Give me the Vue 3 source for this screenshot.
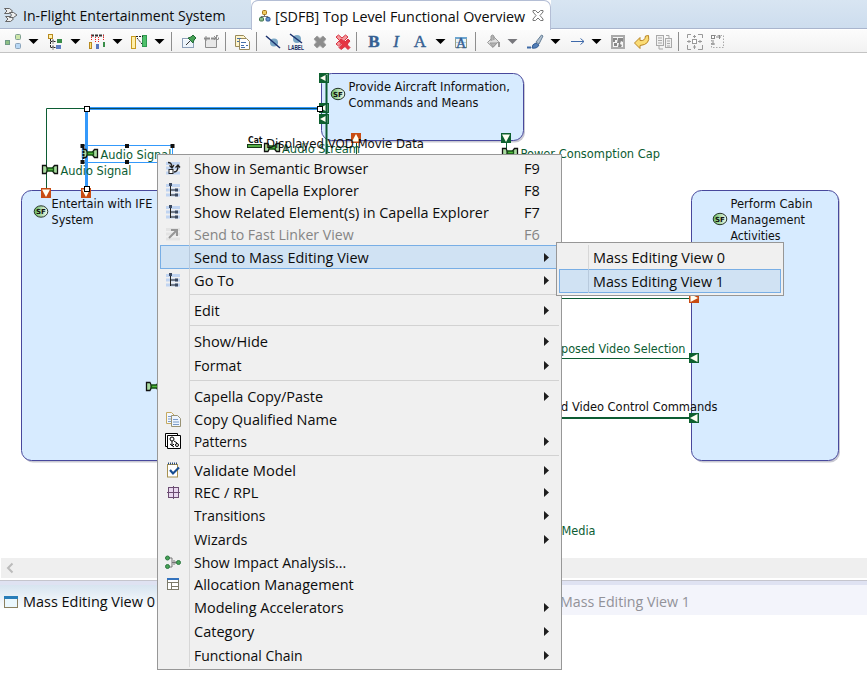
<script setup>
const vFit = {
  mounted(el, binding) {
    const natural = el.offsetWidth
    if (binding.value && natural) el.style.transform = `scaleX(${binding.value / natural})`
  }
}

// Toolbar entries: [kind, space before the entry]
const tools = [
  ['layout', 5], ['drop', 8], ['tree', 9], ['drop', 8], ['distribute', 9], ['drop', 8], ['size', 9], ['drop', 8],
  ['sep', 7], ['pin', 9], ['unpin', 7], ['sep', 5], ['paste', 8], ['sep', 6], ['hide', 8], ['hideLabel', 7],
  ['delete', 8], ['deleteModel', 7], ['sep', 5], ['bold', 9], ['italic', 6], ['font', 8], ['drop', 8], ['fontBox', 8],
  ['sep', 6], ['bucket', 9], ['dropOff', 7], ['brush', 10], ['drop', 8], ['line', 10], ['drop', 6], ['image', 9],
  ['undo', 8], ['copy', 6], ['sep', 6], ['autosize', 8], ['region', 7]
]

const menu = [
  { t: 'Show in Semantic Browser', w: 174, icon: 'semantic', key: 'F9' },
  { t: 'Show in Capella Explorer', w: 165, icon: 'tree', key: 'F8' },
  { t: 'Show Related Element(s) in Capella Explorer', w: 295, icon: 'tree', key: 'F7' },
  { t: 'Send to Fast Linker View', w: 160, icon: 'linker', key: 'F6', off: true },
  { t: 'Send to Mass Editing View', w: 175, sub: true, on: true, tall: true },
  { t: 'Go To', w: 40, icon: 'tree', sub: true },
  { sep: true },
  { t: 'Edit', w: 26, sub: true, tall: true },
  { sep: true },
  { t: 'Show/Hide', w: 74, sub: true, tall: true },
  { t: 'Format', w: 47, sub: true, tall: true },
  { sep: true },
  { t: 'Capella Copy/Paste', w: 129, sub: true, tall: true },
  { t: 'Copy Qualified Name', w: 143, icon: 'copy' },
  { t: 'Patterns', w: 53, icon: 'patterns', sub: true },
  { sep: true },
  { t: 'Validate Model', w: 102, icon: 'validate', sub: true },
  { t: 'REC / RPL', w: 64, icon: 'rec', sub: true },
  { t: 'Transitions', w: 71, sub: true, tall: true },
  { t: 'Wizards', w: 53, sub: true, tall: true },
  { t: 'Show Impact Analysis...', w: 152, icon: 'impact' },
  { t: 'Allocation Management', w: 160, icon: 'table' },
  { t: 'Modeling Accelerators', w: 150, sub: true, tall: true },
  { t: 'Category', w: 60, sub: true, tall: true },
  { t: 'Functional Chain', w: 109, sub: true, tall: true }
]

const nodes = [
  { x: 21.5, y: 190.5, w: 150, h: 270 },
  { x: 321.5, y: 73.5, w: 202, h: 67 },
  { x: 691.5, y: 190.5, w: 147, h: 270 }
]
const badges = [[41, 211.5], [338, 94], [720, 219]]
const nodeTexts = [
  ['Entertain with IFE', 51.5, 208, 101], ['System', 51.5, 224, 42],
  ['Provide Aircraft Information,', 348.5, 91, 161.5], ['Commands and Means', 348.5, 107, 130],
  ['Perform Cabin', 730.5, 208, 82], ['Management', 730.5, 224, 74.5], ['Activities', 730.5, 240, 50]
]
const flowTexts = [
  ['Audio Signal', 60.5, 175, 71], ['Audio Signal', 100.5, 159, 71], ['Audio Stream', 282, 153, 78],
  ['Power Consomption Cap', 520.5, 158, 139.5], ['posed Video Selection', 561, 353, 124.5], ['Media', 561.5, 535, 34]
]
const exchanges = [[42, 165], [82, 149], [264, 143], [502, 148], [146, 382]]
const ports = [
  { x: 41, y: 188, d: 180, c: 'in' }, { x: 81, y: 188, d: 180, c: 'in' },
  { x: 319, y: 73, d: 270, c: 'out' }, { x: 319, y: 103, d: 270, c: 'out' }, { x: 319, y: 114, d: 270, c: 'out' },
  { x: 351, y: 133, d: 0, c: 'in' }, { x: 501, y: 133, d: 180, c: 'out' },
  { x: 689, y: 293, d: 90, c: 'in' }, { x: 689, y: 353, d: 270, c: 'out' }, { x: 689, y: 413, d: 270, c: 'out' }
]
const dots = [[80.5, 144], [125, 144], [170.5, 144], [80.5, 160], [125, 160]]
</script>

<template>
  <div class="window">
    <header class="tabs">
      <div class="tab">
        <svg class="tab-icon" width="16" height="16" viewBox="0 0 16 16">
          <path d="M1.500 1.500h5l3 2.500-3 2.500h-5l2.500-2.500zM6.500 5.500h4l3.500 2.500-3.500 2.500h-4l2-2.500zM2.500 9.500h5l3 2.500-3 2.500h-5l2.500-2.500z" fill="#eee" stroke="#666" />
        </svg>
        <span v-fit="203" class="label">In-Flight Entertainment System</span>
      </div>
      <div class="tab active">
        <svg width="12" height="12" viewBox="0 0 12 12">
          <path d="M5.500 4v3M2 8V6.500h7V8" fill="none" stroke="#777" />
          <rect x="3.500" y=".5" width="4" height="4" rx="1" fill="#f0ca60" stroke="#a57417" />
          <rect x=".5" y="7.500" width="4" height="3.500" rx="1" fill="#8dbb8b" stroke="#3c714a" />
          <rect x="7" y="7.500" width="4" height="3.500" rx="1" fill="#6795ce" stroke="#315894" />
        </svg>
        <div class="title"><span v-fit="250" class="label">[SDFB] Top Level Functional Overview</span></div>
        <svg class="close" width="12" height="11" viewBox="0 0 12 11">
          <path d="M1 .5h2.500L6 3 8.500.5H11V2L8 5.500l3 3.500v1.500H8.500L6 8l-2.500 2.500H1V9l3-3.500L1 2z" fill="#fff" stroke="#777" />
        </svg>
      </div>
      <div class="tab-rest"></div>
    </header>

    <div class="toolbar">
      <template v-for="(t, i) in tools" :key="i">
        <i v-if="t[0] === 'sep'" class="bar-sep" :style="{ marginLeft: t[1] + 'px' }"></i>
        <svg v-else-if="t[0].startsWith('drop')" width="9" height="5" viewBox="0 0 9 5" :style="{ marginLeft: t[1] + 'px' }">
          <path d="M-.5 0h10L4.500 5z" :fill="t[0] === 'drop' ? '#000' : '#77777c'" />
        </svg>
        <svg v-else width="16" height="16" viewBox="0 0 16 16" :style="{ marginLeft: t[1] + 'px' }">
          <g v-if="t[0] === 'layout'" stroke-width="1">
            <rect x=".5" y="6.500" width="4" height="4" fill="#8fc083" stroke="#6f9a86" />
            <rect x="10.500" y=".5" width="5" height="5" rx="1" fill="#cde6a9" stroke="#7f9f92" />
            <rect x="10.500" y="9.500" width="5" height="5" rx="1" fill="#b8d7f4" stroke="#8aa3ba" />
          </g>
          <g v-else-if="t[0] === 'tree'">
            <path d="M3.500 5v9M3.500 7.500h6M3.500 13.500h6M6 5.500v4M6 11.500v4" fill="none" stroke="#222" stroke-dasharray="2 1" />
            <rect x="1.500" y=".5" width="4" height="4" fill="#fff2b0" stroke="#b88a20" />
            <rect x="10" y="5" width="5" height="4" fill="#398d48" /><rect x="9" y="11" width="5" height="4" fill="#607fc4" />
          </g>
          <g v-else-if="t[0] === 'distribute'">
            <path d="M2 1.500h13" stroke="#333" stroke-width="2" stroke-dasharray="3 1" /><path d="M2.500 1v6M6.500 3v6M9.500 3v6M14.500 1v6" stroke="#f02020" stroke-dasharray="1 1" />
            <rect x=".5" y="8.500" width="2" height="6" fill="#ffe37b" stroke="#b88a20" />
            <rect x="7" y="10" width="3" height="5" fill="#5777be" /><rect x="14" y="8" width="2" height="5" fill="#398d48" />
          </g>
          <g v-else-if="t[0] === 'size'">
            <rect x=".5" y="2.500" width="4" height="12" fill="#ffefaa" stroke="#c79a20" />
            <rect x="11.500" y="1.500" width="4" height="11" fill="#4fc06a" stroke="#2f9850" />
            <path d="M5 2.500h7M6 4l5 6" stroke="#222" stroke-dasharray="2 1" />
          </g>
          <g v-else-if="t[0] === 'pin'">
            <rect x="1.500" y="4.500" width="11" height="9" fill="#edf4fb" stroke="#8da0b9" /><path d="M2 5.500h8" stroke="#fff" />
            <path d="M5 11l4-4" stroke="#333" /><path d="M7 4l3-1 2-2 3 3-2 2-1 3z" fill="#47a155" stroke="#246c37" />
          </g>
          <g v-else-if="t[0] === 'unpin'" fill="none" stroke="#8d8d8d">
            <path d="M1.500 5v8.500h11V5" fill="#e8e8e8" /><path d="M0 4.500h15" stroke-width="2" stroke-dasharray="6 1" />
            <path d="M2 2v5M12.500 1v7M10 2l4 4M14 1l-4 5" />
          </g>
          <g v-else-if="t[0] === 'paste'" stroke="#998a5c">
            <path d="M1.500 1.500h8l2 2v9h-10z" fill="#fff5cb" /><path d="M5.500 4.500h7l3 3v8h-10z" fill="#fff" />
            <path d="M3 4.500h4M3 7.500h2M7 8.500h5M7 11.500h3M12 11.500h2M7 13.500h4" stroke="#4770aa" />
          </g>
          <g v-else-if="t[0] === 'hide'">
            <circle cx="9" cy="8.500" r="4" fill="#7ba7c5" /><path d="M1 2l14 12" stroke="#1a316e" stroke-width="1.500" />
          </g>
          <g v-else-if="t[0] === 'hideLabel'">
            <circle cx="9" cy="5" r="4" fill="#7ba7c5" /><path d="M2 0l12 9" stroke="#1a316e" stroke-width="1.500" />
            <text x="0" y="15.500" class="tiny" textLength="16" lengthAdjust="spacingAndGlyphs">LABEL</text>
          </g>
          <path v-else-if="t[0] === 'delete'" d="M2 5l3-3L8 4.500 11 2l3 3-2.500 3 2.500 3-3 3-3-2.500L5 14l-3-3 2.500-3z" fill="#8c8c8c" stroke="#a5a5a5" />
          <g v-else-if="t[0] === 'deleteModel'" fill="#f49a9d" stroke="#d83242">
            <path d="M1 3l2.500-2L7 4l3.500-3L13 3 9.500 6.500 13 10l-2.500 2L7 9l-3.500 3L1 10l3.500-3.500z" />
            <path d="M4 7l2-2 4 3 3-3 2 2-3 3.500 3 3-2 2-3-3-4 3-2-2 3-3z" fill="#e63543" />
          </g>
          <text v-else-if="t[0] === 'bold'" x="8" y="13" class="glyph strong">B</text>
          <text v-else-if="t[0] === 'italic'" x="8" y="13" class="glyph slanted">I</text>
          <text v-else-if="t[0] === 'font'" x="8" y="13" class="glyph">A</text>
          <g v-else-if="t[0] === 'fontBox'">
            <rect x="2.500" y="4.500" width="11" height="9" fill="#eaf4fb" stroke="#9da084" /><path d="M2 4h12" stroke="#6ea5cf" stroke-width="2" /><path d="M3 8.500h10" stroke="#a9cbe4" />
            <text x="8" y="14" class="glyph small">A</text>
          </g>
          <g v-else-if="t[0] === 'bucket'" fill="#ddd" stroke="#999">
            <path d="M2.500 8.500l6-6 5 5-5.500 6z" /><path d="M6 7V2q1.500-2 3 0v4M5 9h7l-4 4z" fill="#b3b3b3" /><path d="M14 8v5" stroke-width="2" />
          </g>
          <g v-else-if="t[0] === 'brush'">
            <path d="M0 13.500h4" stroke="#3e6aa7" stroke-width="2" /><path d="M5 14q0-4 4-5l3 2q-2 4-7 3z" fill="#527eb6" stroke="#315b94" />
            <path d="M9 8l5.500-7L16 2l-4 8z" fill="#b1c1d1" stroke="#647d95" />
          </g>
          <path v-else-if="t[0] === 'line'" d="M1 7.500h13M10.500 4.500l3.500 3-3.500 3" fill="none" stroke="#3e69aa" />
          <g v-else-if="t[0] === 'image'">
            <rect x="2" y="2" width="12" height="12" fill="#f6f6f6" stroke="#aaa" stroke-width="2" />
            <path d="M3 4h4v2H5v2H3zM8 4h5v4l-2-1-1 3 2 1-1 2H8l1-4H7zM4 9h3v3H4z" fill="#888" />
          </g>
          <path v-else-if="t[0] === 'undo'" d="M.5 9L6 3.500v3q5 1 5.500-4.500l3-.5q2 9-8.500 10v3z" fill="#fbdc75" stroke="#b98728" />
          <g v-else-if="t[0] === 'copy'" fill="#f1f1f1" stroke="#a9a9a9">
            <rect x=".5" y="1.500" width="7" height="10" /><rect x="9.500" y="4.500" width="6" height="9" />
            <path d="M2 4h4M2 6.500h4M2 9h4M11 7h3M11 9.500h3M11 12h3M10 1.500h3V4M3 12v3h4" />
          </g>
          <g v-else-if="t[0] === 'autosize'" fill="none" stroke="#999">
            <rect x="5.500" y="5.500" width="4" height="4" fill="#fff" />
            <path d="M.5 4V.5H4M11 .5h4.500V4M.5 11v4.500H4M11 15.500h4.500V11M7.500 1v3M7.500 11v4M0 7.500h4M11 7.500h4M6 2.500h3M6 13h3M2 6v3M13 6v3" />
          </g>
          <g v-else fill="none" stroke="#aaa">
            <rect x="1.500" y="1.500" width="12" height="12" stroke-dasharray="1.500 1.500" />
            <rect x="1.500" y="1.500" width="3" height="3" fill="#fff" stroke="#888" /><path d="M6 3h5M3 6v5M9.500 1v4M1 10h4" stroke="#888" />
          </g>
        </svg>
      </template>
    </div>

    <svg class="canvas" width="867" height="505" viewBox="0 53 867 505">
      <defs>
        <linearGradient id="sf"><stop offset="0" stop-color="#65b960" /><stop offset="1" stop-color="#f5fbf1" /></linearGradient>
      </defs>
      <g v-for="(n, i) in nodes" :key="i">
        <rect :x="n.x + 1.5" :y="n.y + 2" :width="n.w" :height="n.h" rx="10" fill="#c8c8d2" />
        <rect :x="n.x" :y="n.y" :width="n.w" :height="n.h" rx="10" fill="#d7ebff" stroke="#48489c" />
      </g>
      <g fill="none" stroke="#0c5c33">
        <path d="M46.500 189V108.500H87M562 298.500h128M562 358.500h128M356.500 143v12M506.500 142v8" />
        <path d="M562 418h128" stroke-width="2" />
      </g>
      <path d="M86.500 190V108.500H320" fill="none" stroke="#3499fb" stroke-width="3" />
      <path d="M88 108.500H320" fill="none" stroke="#0c4c60" />
      <g v-for="(p, i) in ports" :key="'p' + i" :transform="`translate(${p.x} ${p.y})`" :class="p.c">
        <rect width="10" height="10" /><path d="M5 1L9 8.500H1z" :transform="`rotate(${p.d} 5 5)`" fill="#fffff2" />
      </g>
      <path d="M326.500 75v80" stroke="#0c5c33" stroke-width="2" />
      <g v-for="(e, i) in exchanges" :key="'e' + i" :transform="`translate(${e[0]} ${e[1]})`" stroke-width="1.300">
        <path d="M.5 .5H4Q6.500 4.500 4 8.500H.5z" fill="#a9dba0" stroke="#111" />
        <path d="M15.500 .5H12.500L10.500 3V6L12.500 8.500H15.500z" fill="#a9dba0" stroke="#111" />
        <path d="M5.500 3h6v3h-6z" fill="#50bd39" stroke="#164f16" />
      </g>
      <g v-for="(b, i) in badges" :key="'b' + i">
        <ellipse :cx="b[0]" :cy="b[1]" rx="6.800" ry="5.700" fill="url(#sf)" stroke="#263529" />
        <text :x="b[0]" :y="b[1] + 2.700" class="sf">SF</text>
      </g>
      <text v-for="t in nodeTexts" :key="t[0]" :x="t[1]" :y="t[2]" :textLength="t[3]" lengthAdjust="spacingAndGlyphs">{{ t[0] }}</text>
      <text v-for="(t, i) in flowTexts" :key="'f' + i" :x="t[1]" :y="t[2]" :textLength="t[3]" lengthAdjust="spacingAndGlyphs" class="flow">{{ t[0] }}</text>
      <text x="561" y="411" textLength="156.5" lengthAdjust="spacingAndGlyphs">d Video Control Commands</text>
      <text x="266" y="148" textLength="158" lengthAdjust="spacingAndGlyphs">Displayed VOD Movie Data</text>
      <text x="248" y="143" class="cat" textLength="14.500" lengthAdjust="spacingAndGlyphs">Cat</text>
      <rect x="247.500" y="144.500" width="14" height="3" fill="#55ac45" stroke="#163b16" />
      <rect x="82.500" y="145.500" width="90" height="17" fill="none" stroke="#3499fb" />
      <path d="M83.500 148v12" stroke="#111" stroke-width="2" stroke-dasharray="2 1" />
      <rect v-for="(d, i) in dots" :key="'d' + i" :x="d[0]" :y="d[1]" width="4" height="4" />
      <g fill="#fff" stroke="#000"><rect x="84.500" y="106.500" width="5" height="5" /><rect x="84.500" y="186.500" width="5" height="5" /><rect x="317.500" y="106.500" width="5" height="5" /></g>
    </svg>

    <div class="scroll">
      <svg width="8" height="10" viewBox="0 0 8 10"><path d="M6.500 .5L2 5l4.500 4.500" fill="none" stroke="#bbb" stroke-width="2" /></svg>
    </div>
    <div class="sash"></div>
    <div class="views">
      <div class="view current">
        <svg width="14" height="12" viewBox="0 0 14 12"><rect x=".5" y=".5" width="13" height="11" fill="#eaf7fd" stroke="#8a8060" /><path d="M0 1.500h14" stroke="#287db9" stroke-width="3" /></svg>
        <span v-fit="132" class="label">Mass Editing View 0</span>
      </div>
      <div class="view"><span v-fit="130" class="label muted">Mass Editing View 1</span></div>
    </div>

    <div class="menu main">
      <template v-for="(m, i) in menu" :key="i">
        <div v-if="m.sep" class="sep"></div>
        <div v-else class="item" :class="{ on: m.on, off: m.off, tall: m.tall }">
          <span class="icon">
            <svg v-if="m.icon" width="16" height="16" viewBox="0 0 16 16">
              <g v-if="['tree', 'semantic', 'linker'].includes(m.icon)" fill="none">
                <path d="M1 3.500h14M1 8h14M1 13h14" :stroke="m.off ? '#e3e3e3' : '#c0d4f1'" stroke-width="3" />
                <g v-if="m.icon === 'tree'"><path d="M5.500 2v12M5.500 8h5M5.500 13h5" stroke="#222" /><path d="M4 1h3v3H4zM10 6.500h3v3h-3zM10 11.500h3v3h-3z" fill="#3b4960" /></g>
                <g v-else-if="m.icon === 'semantic'" stroke="#222"><path d="M3 2.500q4 0 4 5M4.500 5.500L7 8l2-3M9 12q4 0 4-6M10.500 7.500L13 5l2 2.500" stroke-width="1.300" /><rect x="4" y="9.500" width="4" height="4" fill="#fff" /></g>
                <path v-else d="M4 12l7-7M6 4h6v6" stroke="#969696" stroke-width="2" />
              </g>
              <g v-else-if="m.icon === 'copy'">
                <path d="M1.500 1.500h5l3 3v8h-8z" fill="#f2f7ff" stroke="#c5a95f" /><path d="M6.500 4.500h6l3 3v8h-9z" fill="#edf5ff" stroke="#999274" />
                <path d="M3 5.500h3M3 8h3M3 10.500h3M8 8.500h5M8 11h6M8 13.500h6" stroke="#7b9bc8" />
              </g>
              <g v-else-if="m.icon === 'patterns'" fill="#fff" stroke="#000">
                <path d="M.5 .5h12v13H.5z" /><path d="M2.500 2.500h13v13h-13z" /><circle cx="7" cy="6" r="2" fill="none" /><circle cx="12" cy="12" r="1.500" fill="none" /><path d="M7 8v5l2-2M9 8l3 2M5 11l4 3" fill="none" />
              </g>
              <g v-else-if="m.icon === 'validate'" fill="none">
                <rect x="2.500" y="2.500" width="10" height="12.500" fill="#fff" stroke="#a69150" /><path d="M3 1.500h10" stroke="#25497c" stroke-width="2" stroke-dasharray="1 1" />
                <path d="M5 8l3 3.500 6-6" stroke="#174d91" stroke-width="2.200" />
              </g>
              <g v-else-if="m.icon === 'rec'" fill="#e9d9ef" stroke="#6c4d73"><rect x="3.500" y="3.500" width="10" height="10" /><path d="M8.500 2v13M2 8.500h13" /></g>
              <g v-else-if="m.icon === 'impact'" stroke="#777" fill="none">
                <path d="M4 4h3v9H4M7 8.500h6M9 6v5M11 7v3" /><g fill="#47a356" stroke="#2c7741"><circle cx="2.500" cy="4" r="2" /><circle cx="2.500" cy="12.500" r="2" /><circle cx="13.500" cy="8.500" r="2" /></g>
              </g>
              <g v-else fill="#fff" stroke="#7c7a69"><rect x="2.500" y="2.500" width="11" height="11" /><path d="M2 6.500h12M6.500 6v8M6 10.500h8" /><path d="M2 3h12" stroke="#3473bd" stroke-width="2" /></g>
            </svg>
          </span>
          <span class="content"><span v-fit="m.w" class="label">{{ m.t }}</span></span>
          <span v-if="m.key" class="key"><span v-fit="15.500" class="label">{{ m.key }}</span></span>
          <svg v-if="m.sub" class="sub" width="5" height="9" viewBox="0 0 5 9"><path d="M0 0l5 4.500L0 9z" fill="#1e1e1e" /></svg>
        </div>
      </template>
    </div>

    <div class="menu flyout">
      <div class="item tall"><span class="icon"></span><span class="content"><span v-fit="132" class="label">Mass Editing View 0</span></span></div>
      <div class="item tall on"><span class="icon"></span><span class="content"><span v-fit="131" class="label">Mass Editing View 1</span></span></div>
    </div>
  </div>
</template>

<style>
body { background: #fff; overflow: hidden; }
</style>

<style scoped>
.window { position: relative; width: 867px; height: 677px; overflow: hidden; background: #fff; font-family: "Open Sans", "Noto Sans", sans-serif; font-size: 15px; color: #0c0c0c; }
.window svg { display: block; flex: none; overflow: visible; }
.label { display: inline-block; white-space: nowrap; transform-origin: left center; line-height: 20px; flex: none; }
.tabs { display: flex; height: 30px; }
.tab { box-sizing: border-box; display: flex; align-items: center; width: 251px; height: 29px; padding: 1px 0 0 3px; background: linear-gradient(#d5e3f0, #cfdfee); border-bottom: 1px solid #a9b5cd; }
.tab > .label { margin-left: 4px; }
.tab.active { width: 300px; height: 30px; padding: 0 12px 0 7px; background: #fff; border: 1px solid #b4bed5; border-bottom: 0; border-radius: 7px 7px 0 0; }
.title { display: flex; width: 250px; margin-left: 4px; flex: none; }
.close { margin-left: 7px; }
.tab-rest { flex: 1; height: 28px; background: linear-gradient(#d8e5f2, #cdddee); border-bottom: 1px solid #a9b5cd; }
.toolbar { box-sizing: border-box; display: flex; align-items: center; height: 23px; padding-top: 1px; background: linear-gradient(#fcfcfc, #f2f2f2); border-bottom: 1px solid #c3c3c3; }
.bar-sep { width: 1px; height: 19px; flex: none; background: #8e8e8e; }
.glyph { font: 17px "Liberation Serif", serif; fill: #355f92; stroke: #355f92; stroke-width: .4px; text-anchor: middle; }
.strong { font-weight: bold; }
.slanted { font-style: italic; }
.small { font-size: 14px; }
.tiny { font: bold 7px "Liberation Sans", sans-serif; fill: #132b62; }
.canvas { font: 12px "DejaVu Sans Condensed", "DejaVu Sans", sans-serif; fill: #101010; }
.flow { fill: #0c5c33; }
.sf { font: bold 7px "DejaVu Sans", sans-serif; text-anchor: middle; }
.cat { font: bold 9px "DejaVu Sans", sans-serif; }
.in rect { fill: #c84c13; }
.out rect { fill: #0e602f; }
.scroll { display: flex; align-items: center; height: 20px; margin-left: 1px; padding-left: 5px; background: #efefef; }
.sash { height: 4px; margin-top: 2px; background: #dfe2f2; border-top: 1px solid #c5c5cd; }
.views { display: flex; height: 30px; background: #f3f4fb; }
.view { display: flex; align-items: center; padding: 1px 0 0; }
.view.current { box-sizing: border-box; width: 560px; padding-left: 4px; gap: 5px; background: linear-gradient(#d7e4f0, #fff 85%); }
.view svg { margin-top: 2px; }
.muted { color: #929299; }
.menu { position: absolute; box-sizing: border-box; padding: 2px; border: 1px solid #979797; background: #f0f0f0; }
.main { left: 157px; top: 154px; width: 405px; height: 516px; }
.flyout { left: 556px; top: 242px; width: 228px; height: 54px; }
.item { position: relative; box-sizing: border-box; display: flex; align-items: center; height: 22px; }
.item.tall { height: 24px; }
.item.on { background: #d0e2f3; box-shadow: inset 0 0 0 1px #78aee5; }
.item.off { color: #858585; }
.icon { box-sizing: border-box; display: flex; align-items: center; width: 30px; height: 100%; padding-left: 5px; border-right: 1px solid #d7d7d7; }
.on .icon { border-color: #b8cadd; }
.content { display: flex; flex: 1; min-width: 0; padding: 0 0 0 4px; }
.key { width: 35px; }
.sub { margin-right: 10px; }
.sep { position: relative; box-sizing: border-box; height: 7px; margin-left: 29px; padding-top: 3px; border-left: 1px solid #d7d7d7; }
.sep::before { content: ""; display: block; height: 1px; background: #d2d2d2; }
</style>
